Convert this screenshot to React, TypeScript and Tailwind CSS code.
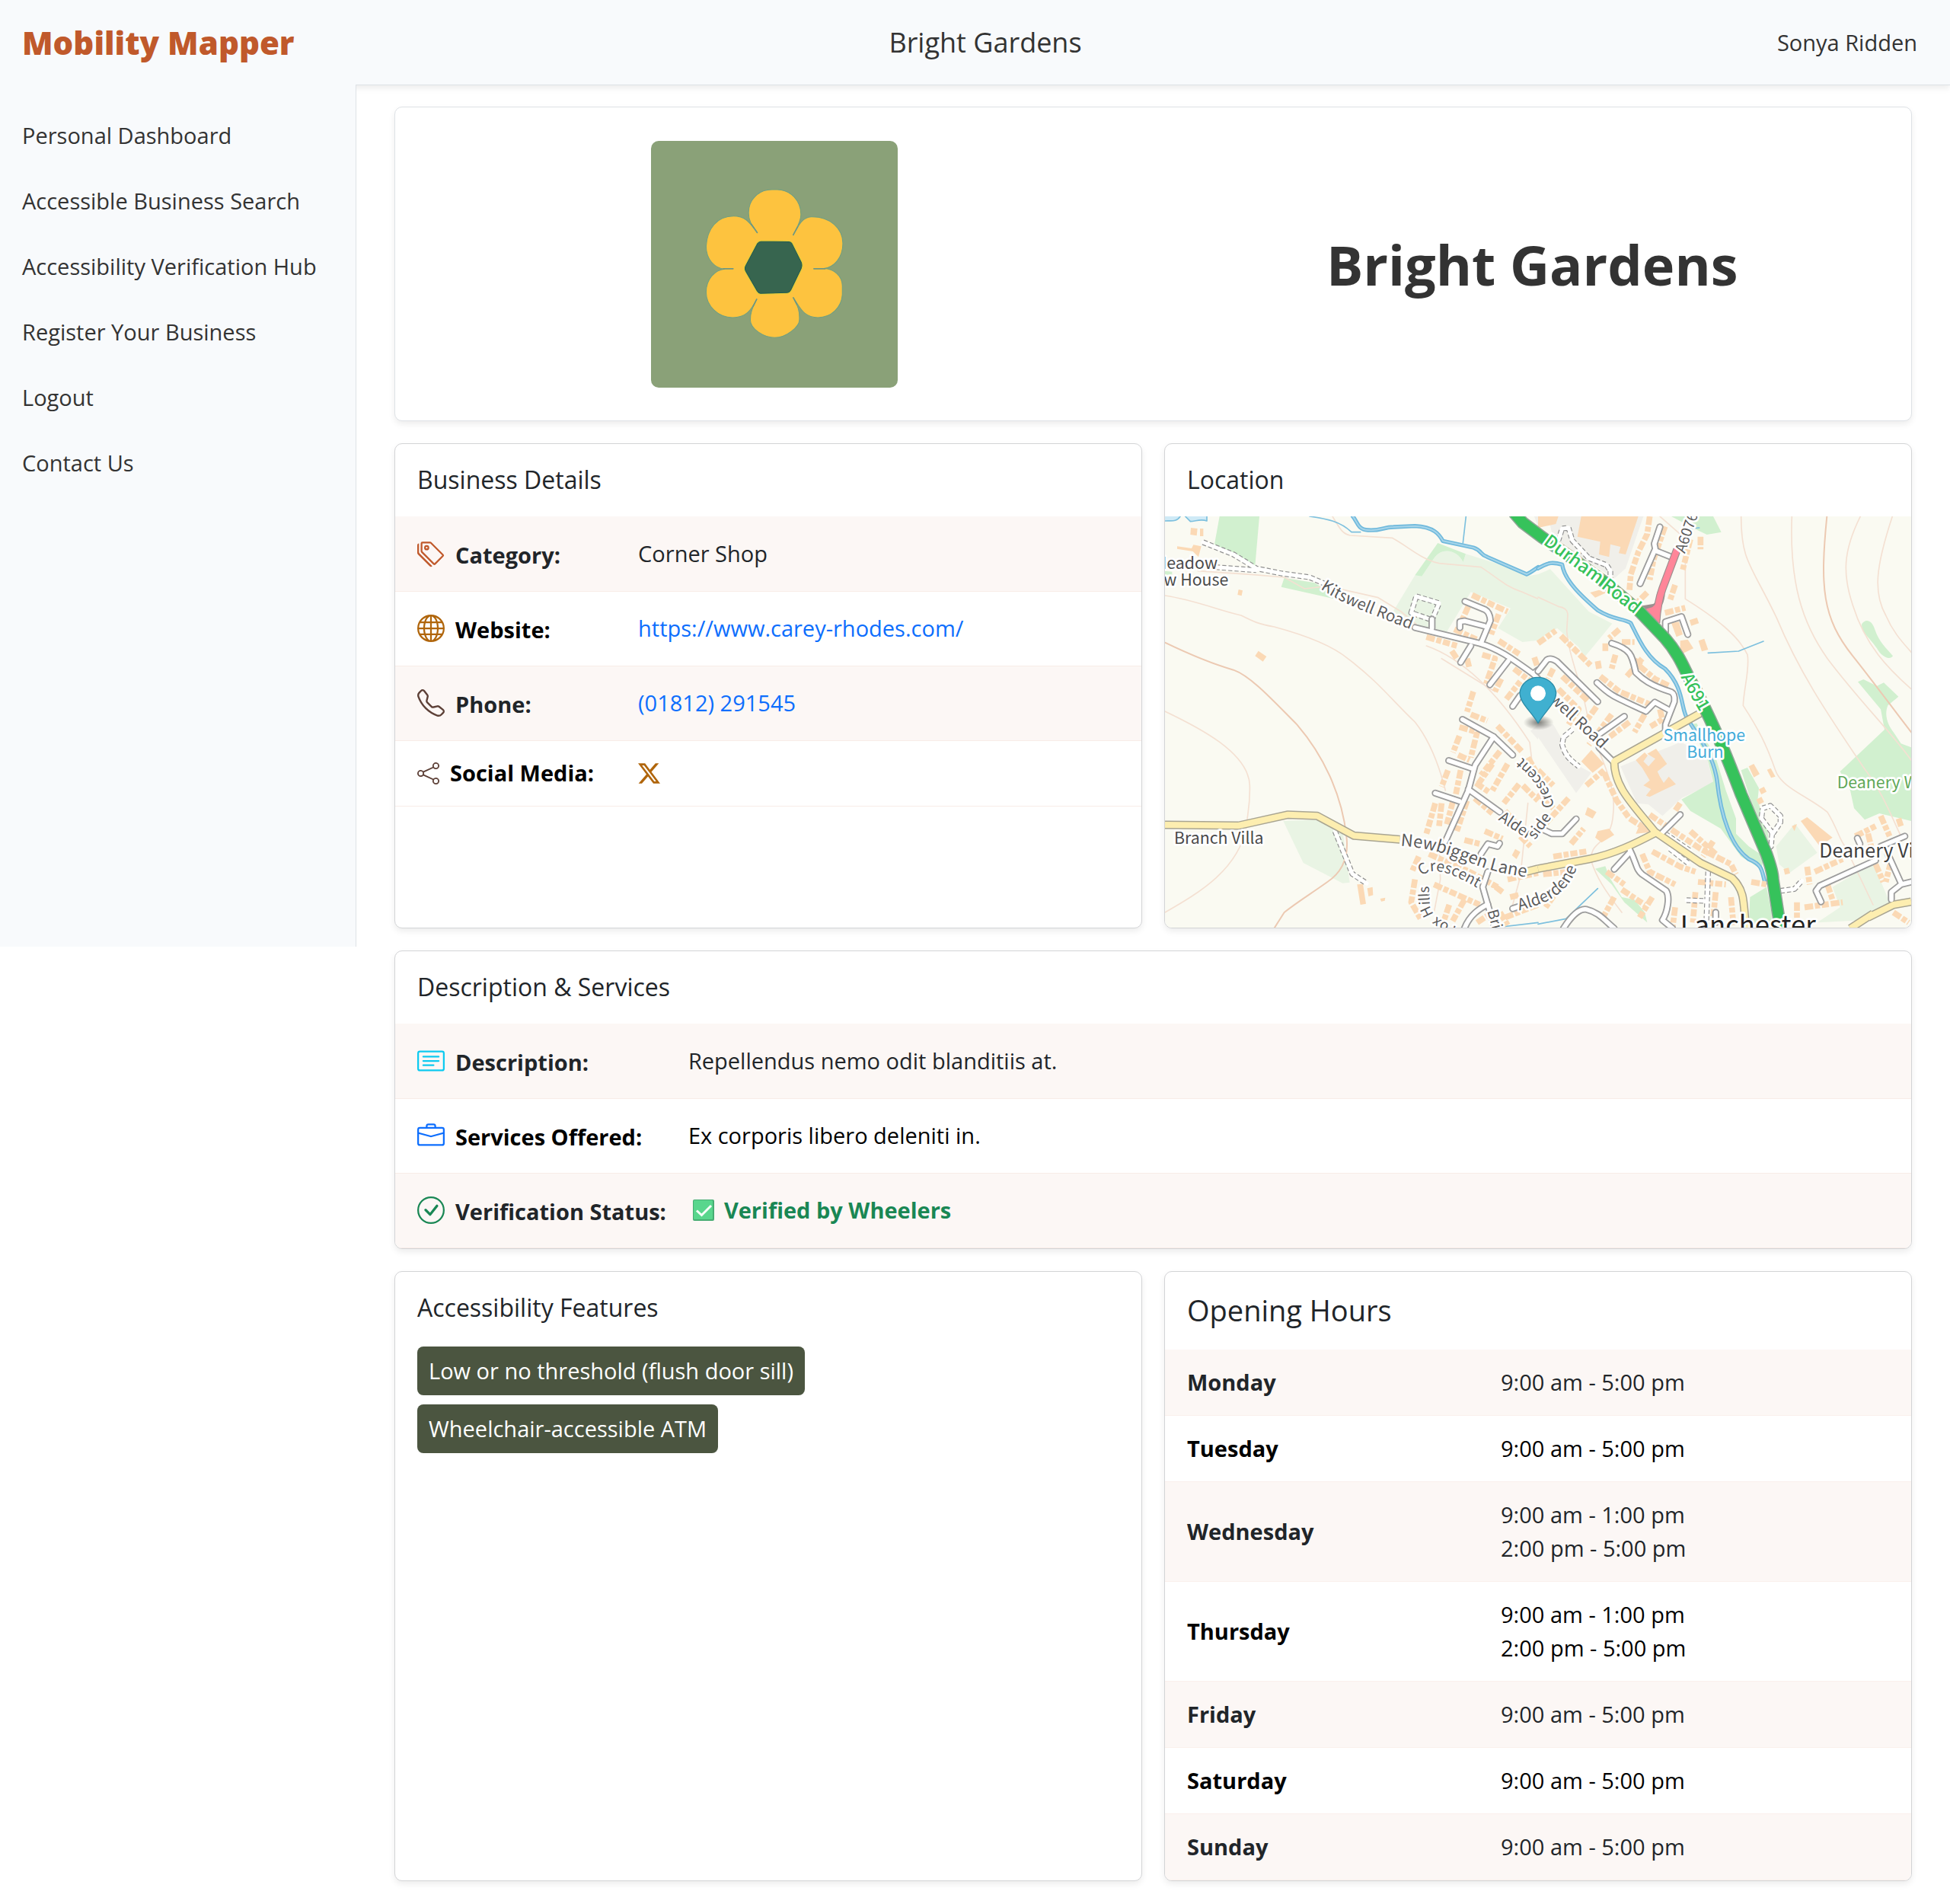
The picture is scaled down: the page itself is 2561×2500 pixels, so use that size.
import type { ReactNode } from "react";
import {
  BsBriefcase,
  BsCardText,
  BsCheckCircle,
  BsGlobe,
  BsShare,
  BsTags,
  BsTelephone,
  BsTwitterX,
} from "react-icons/bs";

const navItems = [
  "Personal Dashboard",
  "Accessible Business Search",
  "Accessibility Verification Hub",
  "Register Your Business",
  "Logout",
  "Contact Us",
];

const features = ["Low or no threshold (flush door sill)", "Wheelchair-accessible ATM"];

const hours: { day: string; slots: string[] }[] = [
  { day: "Monday", slots: ["9:00 am - 5:00 pm"] },
  { day: "Tuesday", slots: ["9:00 am - 5:00 pm"] },
  { day: "Wednesday", slots: ["9:00 am - 1:00 pm", "2:00 pm - 5:00 pm"] },
  { day: "Thursday", slots: ["9:00 am - 1:00 pm", "2:00 pm - 5:00 pm"] },
  { day: "Friday", slots: ["9:00 am - 5:00 pm"] },
  { day: "Saturday", slots: ["9:00 am - 5:00 pm"] },
  { day: "Sunday", slots: ["9:00 am - 5:00 pm"] },
];

function Card({ children, className = "" }: { children: ReactNode; className?: string }) {
  return (
    <section
      className={`overflow-hidden rounded-[10px] border border-[#d3d4d6] bg-white shadow-[0_4px_8px_rgba(0,0,0,0.075)] ${className}`}
    >
      {children}
    </section>
  );
}

function CardTitle({ children }: { children: ReactNode }) {
  return <h2 className="px-[29px] pt-7 pb-[29px] text-[32px] leading-[38px] font-medium">{children}</h2>;
}

function DetailRow({
  icon,
  label,
  children,
  compact = false,
}: {
  icon: ReactNode;
  label: string;
  children: ReactNode;
  compact?: boolean;
}) {
  return (
    <tr className="border-b border-[#f8ece7] odd:bg-[#fcf7f5] even:text-black">
      <th
        scope="row"
        className={`w-px pl-[29px] text-left font-bold whitespace-nowrap ${compact ? "h-[86px]" : "h-[98px]"}`}
      >
        <span className={`flex items-center ${compact ? "gap-[14px]" : "gap-[14px]"}`}>
          {icon}
          <span className={compact ? "" : "pt-1"}>{label}</span>
        </span>
      </th>
      <td>{children}</td>
    </tr>
  );
}

function FlowerLogo() {
  return (
    <svg
      viewBox="165 195 971 971"
      role="img"
      aria-label="Bright Gardens logo"
      className="size-[324px] rounded-[10px] bg-[#8aa178]"
    >
      <path
        d="M583 556C562 526 549 510 549 478C549 425 590 387 640 387H662C715 388 755 430 755 485C755 512 740 536 725 565C745 530 758 496 795 494C870 492 920 540 920 598C920 655 885 693 845 697C885 699 917 725 918 765V800C915 850 875 890 822 890C765 890 752 850 725 812C742 845 751 860 749 900C748 925 700 969 652 969C610 969 556 935 556 900C556 865 567 848 581 818C558 862 540 890 486 890C430 890 382 845 382 790C382 740 415 703 455 699C415 696 382 660 382 610C386 540 425 491 490 491C540 491 555 520 583 556Z"
        fill="#fdc33f"
        stroke="#6f9f80"
        strokeWidth="3"
      />
      <path d="M583 556C573 541 566 531 560 523M725 565C731 552 737 543 742 533M488 698H450M806 698H850M581 818L567 846M725 812L739 838" fill="none" stroke="#6f9780" strokeWidth="5" strokeLinecap="round" />
      <path
        d="M597 589L706 590Q716 591 722 600L758 672Q763 684 758 697L718 782Q711 794 699 794L596 797Q587 797 581 787L536 708Q530 697 536 686L582 599Q588 589 597 589Z"
        fill="#37654f"
        stroke="#e9cb3b"
        strokeWidth="8"
      />
      <path
        d="M597 591L706 592Q716 592 720 600L756 672Q761 684 756 697L716 780Q710 792 699 792L596 795Q589 795 583 786L538 708Q532 697 538 686L584 599Q590 591 597 591Z"
        fill="#37654f"
        stroke="#1f5a50"
        strokeWidth="3"
      />
    </svg>
  );
}

/* Map geometry: drawn in two sheets, the east one shifted by 1470 units. */
const west = {
  woods: [
    "M215 0H372L355 195L195 110Z",
    "M470 242L590 262L700 332L458 278Z",
    "M985 232L1075 105L1185 148L1175 180C1150 130 1090 120 1060 165L1012 236Z",
    "M0 215L28 218V230H0Z",
  ],
  parks: [
    "M1060 165C1090 120 1150 130 1175 180L1185 148L1320 190L1430 235L1470 228V488L1408 495L1312 440L1362 362L1205 298L1110 455L1040 440L960 420L890 390L985 232L1012 236Z",
    "M466 1200L600 1195L700 1240L728 1442L700 1445L545 1365Z",
  ],
  urban: ["M1440 845L1470 820V880Z", "M1455 0H1470V40Z"],
  contours: [
    "M0 312C120 330 210 370 300 390C350 415 370 425 430 435C560 470 660 510 720 560C840 650 900 730 985 810C1040 880 1080 980 1105 1080",
    "M0 768C130 830 330 930 334 1060C336 1150 322 1180 322 1220C290 1390 140 1480 0 1560",
    "M130 215L350 230L470 240L550 285L640 275L840 320L930 375L990 425",
    "M660 0C690 50 700 70 730 75L895 85C960 120 1010 170 1080 185L1245 200C1320 250 1350 280 1400 295L1470 325",
    "M1030 510C1200 570 1340 740 1437 890L1450 1000",
    "M1430 1130L1400 1420L1370 1530",
    "M1090 560L1300 690",
    "M1080 1300L1085 1430L1060 1560",
  ],
  boldContours: [
    "M0 497C110 550 200 585 270 605C340 630 430 730 520 820C640 960 700 1120 715 1260C725 1340 700 1400 640 1440C570 1490 520 1520 470 1560L430 1623",
  ],
  ponds: ["M0 0H60C45 25 20 15 0 18Z", "M80 0H165V18C140 8 120 20 100 20Z"],
  streams: [
    "M570 0C640 10 690 20 735 62H770",
    "M1186 0L1174 105",
    "M0 18C20 15 45 25 60 0M80 0L100 20C120 20 140 8 165 18V0",
    "M1300 1620L1470 1600",
  ],
  rivers: ["M740 0C758 20 758 52 800 54C850 58 860 42 900 42L985 38C1060 42 1080 70 1095 97L1215 123C1250 135 1240 150 1270 160L1425 228C1440 222 1455 210 1470 200"],
  roads: [
    "M985 438L1240 500C1310 520 1360 555 1450 620L1470 640",
    "M1182 335L1262 368Q1280 378 1282 410L1245 500",
    "M1162 438V415L1180 412L1258 432",
    "M1205 510L1165 575",
    "M1352 570L1280 663",
    "M1370 748L1400 705",
    "M1450 620L1470 605",
    "M1052 440V405",
    "M1172 800L1295 868L1370 940",
    "M1295 868L1222 980L1195 1080L1105 1280",
    "M1118 962L1215 995",
    "M1065 1090L1160 1122",
    "M1195 1075L1320 1165",
    "M1245 1330L1272 1290L1310 1300L1318 1288",
    "M1272 1400L1252 1460L1272 1530L1300 1623",
    "M1180 1623C1200 1570 1240 1545 1272 1528",
    "M1370 1545L1400 1535",
  ],
  yellow: ["M0 1215L290 1218L485 1175L600 1180L745 1258L925 1273", "M1385 1398L1430 1398L1470 1388"],
  tracks: [
    "M150 102L270 150L360 205L460 225L570 240L640 270",
    "M200 200L360 212",
    "M955 432L990 438",
    "M670 1240L738 1408L795 1446",
    "M990 315L1080 342L1052 408L970 380L990 315",
  ],
  buildingRows: [
    "M1030 475L1150 510",
    "M1140 445L1240 490",
    "M1210 310L1305 355L1350 375",
    "M1195 355L1170 410M1315 385L1285 465",
    "M1315 490L1400 545",
    "M1250 545L1300 560L1265 660",
    "M1325 640L1300 690M1345 720L1400 650",
    "M1375 600L1440 650M1455 555L1470 600",
    "M1215 690L1190 770",
    "M1130 530L1150 560M1190 560L1200 600",
    "M1205 780L1270 805M1310 825L1410 930M1430 950L1470 1020",
    "M1160 830L1230 850L1205 950",
    "M1160 865L1135 930M1155 940L1200 960",
    "M1115 1000L1090 1065M1165 1000L1145 1100",
    "M1065 1130L1030 1250M1135 1120L1110 1215",
    "M1320 925L1245 1020M1290 975L1230 1060",
    "M1350 975L1290 1080M1395 1055L1335 1130",
    "M1225 1050L1275 1085M1220 1110L1290 1170",
    "M1190 1120L1150 1240M1090 1130L1080 1220",
    "M1410 1060L1470 1120M1340 1160L1400 1230",
    "M1180 1275L1240 1290M1260 1240L1330 1270M1400 1260L1440 1300",
    "M1040 1330L1200 1400L1310 1460",
    "M1000 1340L975 1395M985 1430L970 1520L1010 1590",
    "M1060 1450L1240 1530",
    "M1350 1430L1470 1405M1330 1480L1290 1450",
    "M1340 1580L1470 1530M1180 1510L1130 1600M1230 1600L1290 1560",
    "M1360 1500L1400 1490",
    "M1120 1530L1100 1590M1320 1560L1350 1610",
  ],
  buildings: [
    "M102 45L128 48L125 76L100 72Z",
    "M138 48H151V78H138Z",
    "M48 118L105 126L112 112L143 118L132 160L110 138L48 128Z",
    "M290 288L306 292L302 313L286 309Z",
    "M368 530L400 552L386 572L355 550Z",
    "M757 1450L780 1448L792 1526L770 1530Z",
    "M797 1465L818 1460L820 1492L802 1497Z",
    "M848 1506L868 1502L866 1514L852 1517Z",
    "M1380 1310L1400 1322L1385 1350L1367 1335Z",
  ],
};

const east = {
  woods: [
    "M525 0H690L722 62L665 72L620 50Z",
    "M1275 425C1290 400 1315 410 1325 440C1345 500 1375 520 1398 550C1385 570 1350 550 1335 520C1310 480 1275 460 1275 425Z",
    "M1260 652L1282 642L1335 668L1362 655L1420 710L1378 745C1360 790 1385 830 1400 850L1430 895L1470 910V1200L1345 1170L1287 1195L1245 1150L1230 1080L1190 1005L1365 840L1350 760Z",
    "M800 1000L825 990L870 1070L865 1120L905 1240L910 1310L880 1250Z",
    "M565 1115L690 1045L670 965L600 820L625 815L700 950L740 1080L780 1190V1250L830 1300L890 1340L880 1390L800 1340L720 1230L600 1160Z",
    "M835 1500L900 1460L920 1560V1623H830Z",
    "M225 1388L265 1378L280 1420L330 1500L380 1510L420 1560L430 1600L340 1520L290 1450Z",
  ],
  parks: [
    "M0 228L48 208L200 375L292 422L185 552L215 608L160 515L75 440L0 485Z",
    "M938 1300L1012 1210L1100 1325L990 1405L950 1370Z",
    "M1160 1460L1320 1365L1385 1520L1290 1590L1100 1600L1190 1540Z",
  ],
  urban: [
    "M40 0H415L345 205L300 245L60 90Z",
    "M0 820H60L95 880L120 960L210 1010L150 1090L0 870Z",
    "M325 985L560 890L660 930L690 1050L565 1110L490 1180L435 1135L390 1130Z",
  ],
  contours: [
    "M480 0L560 70L580 160V325C700 400 790 470 825 545C835 600 810 680 808 745C870 840 900 900 935 1000C960 1070 1060 1100 1140 1165C1180 1230 1190 1280 1210 1300L1320 1530",
    "M800 0C800 180 840 190 940 400C1040 640 1170 820 1290 1000C1360 1090 1400 1200 1430 1260",
    "M1000 0C990 260 1040 420 1140 560C1260 720 1400 860 1470 960",
    "M1270 0C1200 140 1200 230 1240 350C1290 510 1380 600 1470 680",
    "M1396 0C1330 200 1320 300 1370 390C1400 460 1440 500 1470 535",
    "M0 318L80 355Q115 360 117 385L113 450C120 560 190 700 200 830C240 930 310 1060 296 1170C290 1300 200 1270 210 1360C230 1420 260 1470 330 1560",
  ],
  boldContours: ["M1138 0C1110 280 1120 400 1240 550C1320 650 1400 760 1470 850"],
  ponds: [],
  streams: ["M670 538L790 531L888 492", "M600 48L635 45", "M0 1606L110 1585L235 1466"],
  rivers: ["M0 205C40 180 60 180 95 190C105 260 190 330 235 370C300 410 330 400 365 420C400 490 430 560 500 600C580 680 560 760 590 800C640 880 690 940 705 1040C720 1180 760 1300 830 1350C890 1375 880 1400 895 1445"],
  roads: [
    "M0 610L35 565Q50 555 75 572L235 730",
    "M290 500C370 525 370 550 385 615C410 640 440 665 525 692Q540 700 537 730L502 820V840",
    "M232 655C290 710 300 710 425 768L460 732L520 765",
    "M480 42L458 108L462 128L402 265",
    "M462 135L525 160",
    "M502 470V415L565 395L590 465",
    "M340 788L235 862",
    "M240 910L295 965",
    "M490 1245L560 1175",
    "M0 1225L55 1250H95L150 1192",
    "M360 1310C390 1370 385 1390 410 1410L505 1475C520 1500 510 1560 490 1590L530 1623",
    "M360 1325L300 1390",
    "M100 1623C140 1560 170 1545 190 1548C240 1560 260 1590 300 1623",
    "M130 1375V1400",
    "M1115 1518L1095 1475L1110 1455L1330 1355",
    "M1350 1300L1445 1260",
    "M1378 1330L1430 1445M1470 1440L1430 1450L1392 1480V1510",
    "M1258 1268L1268 1290",
    "M700 1560V1600",
  ],
  yellow: [
    "M640 775L300 965C300 1060 360 1120 460 1242L640 1365L765 1425C810 1470 810 1500 818 1623",
    "M0 1388L200 1350C300 1330 380 1290 460 1248",
    "M1300 1580L1400 1530L1470 1518",
    "M1230 1623L1320 1565",
  ],
  tracks: [
    "M80 95L95 48L120 45L135 95L200 165L270 192L285 215V245",
    "M135 840L100 870L95 900C110 950 130 960 160 985",
    "M885 1150L915 1140L955 1180V1205L925 1250L880 1190L885 1150",
    "M922 1250L918 1300L905 1310",
    "M955 1475L1010 1468L1040 1435",
    "M670 1400L662 1623M585 1512L660 1515",
    "M500 1250L600 1318M520 1310L590 1365",
  ],
  buildingRows: [
    "M440 0L430 70L395 140L365 230L360 290",
    "M0 500L70 450M90 470L210 590",
    "M60 600L40 640M95 630L200 730",
    "M80 680L160 760L120 820",
    "M320 445L280 480M330 495H380",
    "M265 500V530M305 545L290 600M235 570L240 600",
    "M380 565L410 590M350 630L410 560",
    "M245 630L320 690L440 740",
    "M400 590L460 640L520 670",
    "M230 750L180 820M290 780L200 900M360 810L280 870M420 780L380 850",
    "M480 760L490 800L440 830",
    "M600 90L570 210M640 80L640 130M540 270L520 330",
    "M500 380L580 360M600 420L630 410",
    "M500 40L455 170L440 250",
    "M430 300L395 335",
    "M260 1010L310 1120L360 1190L440 1240",
    "M190 1060L260 1000M0 1000L60 1060",
    "M0 1090L60 1150M120 1110L30 1210M130 1290L180 1230",
    "M440 1175L520 1230L640 1310L760 1370L780 1410",
    "M560 1130L540 1160M600 1240L700 1330M690 1280L650 1340",
    "M450 1320L560 1380L620 1400",
    "M60 1340L190 1320M20 1410L120 1400M100 1440L30 1540",
    "M270 1400L340 1450M410 1330L440 1400L540 1450",
    "M330 1470L420 1530M450 1500L400 1580M540 1540L530 1620",
    "M630 1440L740 1450M620 1480L610 1600M700 1480L690 1580M760 1500L770 1610",
    "M840 1440L900 1450M300 1500L250 1590",
    "M1250 1260L1330 1220M1350 1180L1385 1260M1330 1370L1360 1440M1300 1250L1320 1330",
    "M1090 1400L1200 1350M1140 1450L1160 1510M1050 1540L1200 1520",
    "M1420 1190L1430 1220M1390 1360L1370 1440M1400 1560L1460 1600",
    "M970 1400L990 1395M1020 1520V1600M1060 1380L1070 1450",
    "M880 1070L890 1090M870 1110L880 1130",
  ],
  buildings: [
    "M0 0H80L70 30L0 45Z",
    "M170 0H395L345 150L318 145L325 120L285 110L280 160L240 150L245 100L155 80Z",
    "M205 300L240 290L270 300L225 320Z",
    "M525 420L555 415L570 465L545 475Z",
    "M560 490L590 485L612 520L560 545Z",
    "M632 490L655 482L670 525L645 532Z",
    "M210 920L260 975L215 1010L170 965Z",
    "M385 960L420 930L432 942L415 965L435 985L462 955L430 935L465 915L508 975L470 1005L480 1025L495 1050L515 1025L543 1055L490 1080L440 1105L425 1100L445 1075L415 1060L440 1040L410 990Z",
    "M195 1145L230 1165L215 1190L185 1175Z",
    "M235 1240L280 1230L300 1255L250 1285L225 1265Z",
    "M400 1215L450 1220L435 1245L385 1250Z",
    "M830 985L850 975L873 1015L850 1028Z",
    "M902 998L917 992L935 1025L918 1030Z",
    "M1035 1200L1060 1185L1160 1265L1110 1300Z",
    "M1000 1220L1020 1212L1010 1240Z",
  ],
};

type Sheet = typeof west;

function Lines({ d, color, width, dash, cap = "round" }: { d: string[]; color: string; width: number; dash?: string; cap?: "round" | "butt" }) {
  return (
    <g fill="none" stroke={color} strokeWidth={width} strokeDasharray={dash} strokeLinecap={cap} strokeLinejoin="round">
      {d.map((path) => (
        <path key={path} d={path} />
      ))}
    </g>
  );
}

function Areas({ d, color }: { d: string[]; color: string }) {
  return (
    <g fill={color}>
      {d.map((path) => (
        <path key={path} d={path} />
      ))}
    </g>
  );
}

function Ground({ sheet }: { sheet: Sheet }) {
  return (
    <>
      <Areas d={sheet.urban} color="#f0efea" />
      <Areas d={sheet.parks} color="#e9f4e4" />
      <Areas d={sheet.woods} color="#d1f0cf" />
      <Lines d={sheet.contours} color="#f4e0d2" width={5} />
      <Lines d={sheet.boldContours} color="#ecc9b2" width={6} />
      <Areas d={sheet.ponds} color="#cfeaf6" />
      <Lines d={sheet.streams} color="#7dc0de" width={5} />
      <Lines d={sheet.rivers} color="#6fb9dc" width={16} />
      <Lines d={sheet.rivers} color="#a6d5ea" width={6} />
      <Areas d={sheet.buildings} color="#fbd9b5" />
      <Lines d={sheet.buildingRows} color="#fbd9b5" width={23} dash="34 7 20 7 28 8" cap="butt" />
    </>
  );
}

function Roads({ sheet }: { sheet: Sheet }) {
  return (
    <>
      <Lines d={sheet.tracks} color="#8f8f8f" width={22} dash="16 9" cap="butt" />
      <Lines d={sheet.tracks} color="#ffffff" width={15} />
      <Lines d={sheet.roads} color="#9d9d9d" width={28} />
      <Lines d={sheet.yellow} color="#a9a592" width={33} cap="butt" />
      <Lines d={sheet.roads} color="#ffffff" width={17} />
      <Lines d={sheet.yellow} color="#fdeeb0" width={24} cap="butt" />
    </>
  );
}

const curvedLabels = [
  { id: "kitswell-west", d: "M612 285C700 345 790 375 980 450", text: "Kitswell Road", size: 62, color: "#5b5b5b" },
  { id: "kitswell-east", d: "M1475 690L1760 955", text: "tswell Road", size: 62, color: "#5b5b5b" },
  { id: "newbiggen", d: "M928 1298C1060 1305 1160 1350 1230 1375C1300 1400 1340 1408 1440 1424", text: "Newbiggen Lane", size: 66, color: "#5b5b5b" },
  { id: "alder", d: "M1312 1195L1470 1298", text: "Alder", size: 58, color: "#5b5b5b" },
  { id: "alder-side", d: "M1458 1275L1550 1150", text: "side", size: 58, color: "#5b5b5b" },
  { id: "alder-crescent", d: "M1530 1145Q1530 1050 1355 905", text: "Crescent", size: 58, color: "#5b5b5b" },
  { id: "fox-hills", d: "M1150 1615Q1055 1590 1043 1530L1036 1380", text: "Fox Hills", size: 56, color: "#5b5b5b" },
  { id: "hills-crescent", d: "M1014 1418Q1060 1355 1260 1482", text: "Crescent", size: 58, color: "#5b5b5b" },
  { id: "alderdene", d: "M1396 1552C1480 1530 1600 1500 1632 1350", text: "Alderdene", size: 62, color: "#5b5b5b" },
  { id: "briar", d: "M1270 1555L1310 1700", text: "Briar", size: 58, color: "#5b5b5b" },
  { id: "a6076", d: "M2048 148L2115 -50", text: "A6076", size: 58, color: "#5b5b5b" },
  { id: "durham", d: "M1488 108L1720 278", text: "Durham", size: 70, color: "#36c25b" },
  { id: "durham-road", d: "M1716 280L1900 425", text: "Road", size: 70, color: "#36c25b" },
  { id: "a691", d: "M2032 632C2060 690 2080 720 2130 810", text: "A691", size: 68, color: "#36c25b" },
];

function LocationMap() {
  return (
    <svg
      viewBox="0 0 2940 1620"
      preserveAspectRatio="xMidYMid slice"
      role="img"
      aria-label="Map of Lanchester with a marker on Kitswell Road"
      className="block w-full bg-[#fafaf2] font-['Noto_Sans_CJK_SC','Noto_Sans',sans-serif] font-normal"
    >
      <defs>
        <radialGradient id="pin-shadow">
          <stop offset="0" stopColor="#000" stopOpacity="0.5" />
          <stop offset="1" stopColor="#000" stopOpacity="0" />
        </radialGradient>
      </defs>
      <Ground sheet={west} />
      <g transform="translate(1470 0)">
        <Ground sheet={east} />
      </g>
      <Roads sheet={west} />
      <g transform="translate(1470 0)">
        <Roads sheet={east} />
        <path d="M548 130L490 285Q470 340 465 420M410 368L460 360Q480 350 485 300" fill="none" stroke="#9c8f8f" strokeWidth="32" />
        <path d="M548 130L490 285Q470 340 465 420" fill="none" stroke="#ff8699" strokeWidth="25" />
        <path d="M408 370L450 358Q475 340 478 300L480 400L465 425Z" fill="#ff8699" />
        <g fill="none" strokeLinecap="butt" strokeLinejoin="round">
          <path d="M-95 -15L-60 25L20 85L120 155L270 265L400 375L500 480C570 560 580 620 620 680C720 880 760 990 800 1095L900 1330Q925 1400 925 1430L955 1623" stroke="#8fa596" strokeWidth="51" />
          <path d="M-95 -15L-60 25L20 85L120 155L270 265L400 375L500 480C570 560 580 620 620 680C720 880 760 990 800 1095L900 1330Q925 1400 925 1430L955 1623" stroke="#36c25b" strokeWidth="42" />
        </g>
      </g>
      <g stroke="#fff" strokeWidth="16" strokeLinejoin="round" paintOrder="stroke">
        {curvedLabels.map((label) => (
          <g key={label.id}>
            <path id={label.id} d={label.d} fill="none" stroke="none" />
            <text fontSize={label.size} fill={label.color} className={label.color === "#36c25b" ? "font-medium" : undefined}>
              <textPath href={`#${label.id}`}>{label.text}</textPath>
            </text>
          </g>
        ))}
        <g fill="#4a4a4a" fontSize="64">
          <text x="207" y="208" textAnchor="end">Meadow</text>
          <text x="250" y="274" textAnchor="end">View House</text>
          <text x="36" y="1290">Branch Villa</text>
        </g>
        <g fill="#41abd9" fontSize="64" textAnchor="middle">
          <text x="2125" y="886">Smallhope</text>
          <text x="2128" y="950">Burn</text>
        </g>
        <text x="2648" y="1070" fontSize="64" fill="#5fa857">Deanery Wood</text>
        <text x="2578" y="1345" fontSize="75" fill="#3f3f3f">Deanery View</text>
        <text x="2030" y="1648" fontSize="104" fill="#222">Lanchester</text>
      </g>
      <ellipse cx="1472" cy="812" rx="60" ry="30" fill="url(#pin-shadow)" />
      <path d="M1470 814C1440 765 1398 735 1398 694A72 68 0 0 1 1541 694C1541 735 1500 765 1470 814Z" fill="#40b0d0" stroke="#2b8ca8" strokeWidth="4" />
      <circle cx="1470" cy="697" r="30" fill="#fff" />
    </svg>
  );
}

function CheckBadge() {
  return (
    <svg viewBox="0 0 28 28" aria-hidden="true" className="size-7">
      <rect width="28" height="28" rx="2" fill="#47ad73" />
      <rect x="1" y="1" width="25" height="25" rx="1" fill="#59d68d" />
      <path d="M5 14.5L11.5 20.5L24 8" fill="none" stroke="#f7fff9" strokeWidth="3" />
    </svg>
  );
}

export default function App() {
  return (
    <div className="min-h-screen bg-white font-['Open_Sans',sans-serif] text-[29px] leading-[44px] text-[#212529]">
      <header className="grid h-28 grid-cols-[1fr_auto_1fr] items-center border-b border-[#dee2e6] bg-[#f8fafc] pr-0.5 pl-[29px] text-[#333] shadow-[0_4px_8px_rgba(0,0,0,0.075)]">
        <a href="#" className="justify-self-start text-[42px] leading-[52px] font-extrabold text-[#c0592b]">
          Mobility Mapper
        </a>
        <span className="text-[36px]">Bright Gardens</span>
        <button type="button" className="mr-[41px] justify-self-end">
          Sonya Ridden
        </button>
      </header>

      <div className="flex items-start">
        <nav aria-label="Main" className="relative -mt-px h-[1132px] w-[468px] shrink-0 border-r border-[#dee2e6] bg-[#f8fafc] pt-6 text-[#333]">
          <ul>
            {navItems.map((item) => (
              <li key={item}>
                <a href="#" className="block px-[29px] py-[21px]">
                  {item}
                </a>
              </li>
            ))}
          </ul>
        </nav>

        <main className="grid min-w-0 flex-1 grid-cols-2 gap-[29px] px-[50px] pt-7 pb-[30px]">
          <section className="col-span-2 grid grid-cols-2 place-items-center rounded-[10px] border border-[#dee2e6] bg-white pt-11 pb-[43px] shadow-[0_4px_8px_rgba(0,0,0,0.075)]">
            <FlowerLogo />
            <h1 className="text-[72px] leading-[88px] font-bold text-[#333]">Bright Gardens</h1>
          </section>

          <Card>
            <CardTitle>Business Details</CardTitle>
            <table className="w-full border-collapse [&_th]:pr-[58px]">
              <tbody>
                <DetailRow label="Category:" icon={<BsTags className="size-9 text-[#c0592b]" />}>
                  Corner Shop
                </DetailRow>
                <DetailRow label="Website:" icon={<BsGlobe className="size-9 text-[#b0650b]" />}>
                  <a href="https://www.carey-rhodes.com/" className="text-[#0d6efd]">
                    https://www.carey-rhodes.com/
                  </a>
                </DetailRow>
                <DetailRow label="Phone:" icon={<BsTelephone className="size-9 text-[#5d4037]" />}>
                  <a href="tel:01812291545" className="text-[#0d6efd]">
                    (01812) 291545
                  </a>
                </DetailRow>
                <DetailRow compact label="Social Media:" icon={<BsShare className="size-[29px] text-[#5d4037]" />}>
                  <a href="#" aria-label="X" className="block w-max">
                    <BsTwitterX className="size-[29px] text-[#b0650b]" />
                  </a>
                </DetailRow>
              </tbody>
            </table>
          </Card>

          <Card>
            <CardTitle>Location</CardTitle>
            <LocationMap />
          </Card>

          <Card className="col-span-2">
            <CardTitle>Description &amp; Services</CardTitle>
            <table className="w-full border-collapse [&_th]:pr-[29px]">
              <tbody>
                <DetailRow label="Description:" icon={<BsCardText className="size-9 text-[#0dcaf0]" />}>
                  Repellendus nemo odit blanditiis at.
                </DetailRow>
                <DetailRow label="Services Offered:" icon={<BsBriefcase className="size-9 text-[#0d6efd]" />}>
                  Ex corporis libero deleniti in.
                </DetailRow>
                <DetailRow label="Verification Status:" icon={<BsCheckCircle className="size-9 text-[#198754]" />}>
                  <span className="flex items-center gap-[13px] pl-1.5 font-bold text-[#198754]">
                    <CheckBadge />
                    Verified by Wheelers
                  </span>
                </DetailRow>
              </tbody>
            </table>
          </Card>

          <Card>
            <CardTitle>Accessibility Features</CardTitle>
            <ul className="flex flex-col items-start gap-3 px-[29px] pt-[3px]">
              {features.map((feature) => (
                <li key={feature} className="rounded-[8px] bg-[#4b5540] px-[15px] py-2.5 font-medium text-white">
                  {feature}
                </li>
              ))}
            </ul>
          </Card>

          <Card>
            <h2 className="px-[29px] pt-7 pb-[30px] text-[38px] leading-[44px] font-medium">Opening Hours</h2>
            <table className="w-full border-collapse">
              <tbody>
                {hours.map(({ day, slots }) => (
                  <tr key={day} className="border-b border-[#faf0ec] odd:bg-[#fcf7f5] even:text-black">
                    <th scope="row" className="w-[45%] py-[21px] pl-[29px] text-left font-bold">
                      {day}
                    </th>
                    <td className="py-[21px]">
                      {slots.map((slot) => (
                        <div key={slot}>{slot}</div>
                      ))}
                    </td>
                  </tr>
                ))}
              </tbody>
            </table>
          </Card>
        </main>
      </div>
    </div>
  );
}
